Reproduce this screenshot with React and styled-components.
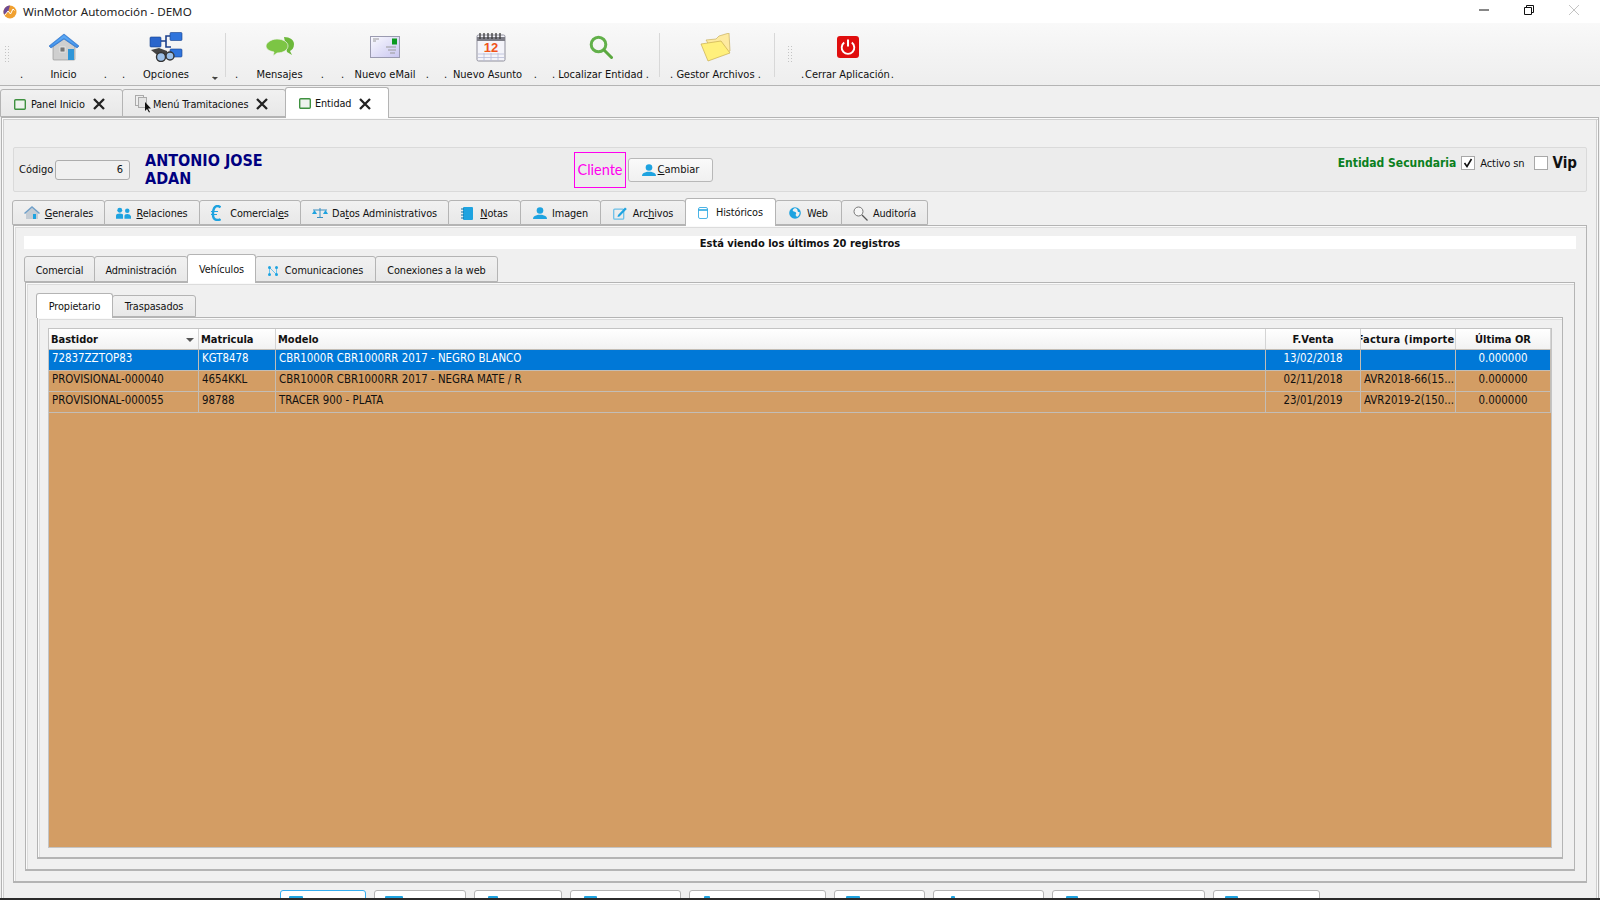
import styled, { createGlobalStyle } from "styled-components";

const BASE_FONT = `"DejaVu Sans Condensed", "DejaVu Sans", sans-serif`;
const LINE = "#b4b4b4";

const GlobalStyle = createGlobalStyle`
  html, body { margin: 0; padding: 0; background: #f0f0f0; }
  * { box-sizing: border-box; }
`;

/* ---------- icons ---------- */

const AppIcon = () => (
  <svg width="14" height="16" viewBox="0 0 14 16">
    <circle cx="7" cy="8" r="6.5" fill="#f0a030" />
    <path d="M7 1.5A6.5 6.5 0 0 0 1 10.5L5 8z" fill="#6d4a96" />
    <path d="M2 11l3-4 2.5 3L10 5l1.5 1.5" fill="none" stroke="#fff" strokeWidth="1" />
  </svg>
);

const HouseIcon = () => (
  <svg width="32" height="28" viewBox="0 0 32 28">
    <path d="M5 13L16 5l11 8v13q0 1-1 1H6q-1 0-1-1z" fill="#cfcfcf" stroke="#8a8a8a" strokeWidth=".6" />
    <path d="M1 13L16 1l15 12-2 2L16 6 3 15z" fill="#3f8fe8" stroke="#2a6cc0" strokeWidth=".6" />
    <path d="M16 2L3 13l13-8 13 8z" fill="#5aa6f2" />
    <rect x="12" y="14" width="5" height="5" fill="#777" stroke="#eee" strokeWidth=".8" />
    <rect x="20" y="16" width="6" height="11" fill="#2f96d8" />
  </svg>
);

const OptionsIcon = () => (
  <svg width="34" height="30" viewBox="0 0 34 30">
    <path d="M12 9h5V4h5M17 9v6h5" fill="none" stroke="#1c3f8a" strokeWidth="1.6" />
    <rect x="1" y="5" width="11" height="10" rx="1" fill="#2b66cc" stroke="#163f8a" strokeWidth=".6" />
    <rect x="21" y="0.5" width="12" height="8" rx="1" fill="#2f74dc" stroke="#163f8a" strokeWidth=".6" />
    <rect x="21" y="17" width="12" height="8" rx="1" fill="#2f74dc" stroke="#163f8a" strokeWidth=".6" />
    <path d="M2 18l8-2 8 3 1 5-7 2z" fill="#444" />
    <circle cx="12" cy="25" r="4.5" fill="#9cc0e8" stroke="#333" strokeWidth="1.4" />
    <circle cx="21" cy="24" r="4" fill="#9cc0e8" stroke="#333" strokeWidth="1.4" />
  </svg>
);

const MessagesIcon = () => (
  <svg width="30" height="22" viewBox="0 0 30 22">
    <path d="M19 1c6 0 10 3 10 7s-2 6-4 7l2 4-5-3z" fill="#6cb83a" />
    <path d="M12 3c6 0 11 3 11 7s-5 7-11 7l-4 3 1-4c-5-1-8-3-8-6s5-7 11-7z" fill="#7cc544" stroke="#f2f2f2" strokeWidth=".7" />
  </svg>
);

const MailIcon = () => (
  <svg width="30" height="22" viewBox="0 0 30 22">
    <defs>
      <linearGradient id="mailFill" x1="0" y1="0" x2="1" y2="1">
        <stop offset="0" stopColor="#fafaff" />
        <stop offset="1" stopColor="#c9c6f0" />
      </linearGradient>
    </defs>
    <rect x=".5" y=".5" width="29" height="21" fill="url(#mailFill)" stroke="#9a9ab0" />
    <rect x="22" y="2.5" width="5" height="6" fill="#0a9a1e" />
    <path d="M3 3h6M3 5h3M16 11h10M18 14h8M20 17h5" stroke="#9a9a9a" strokeWidth="1.1" />
  </svg>
);

const CalendarIcon = () => (
  <svg width="30" height="30" viewBox="0 0 30 30">
    <rect x="1" y="3" width="28" height="26" rx="1.5" fill="#f4f4fa" stroke="#8f8f9c" />
    <path d="M1 5h28v4H1z" fill="#7d7d86" />
    <path d="M4 1v6M8 1v6M12 1v6M16 1v6M20 1v6M24 1v6" stroke="#3a3a3a" strokeWidth="1.3" />
    <text x="15" y="20" fontFamily="Liberation Sans, sans-serif" fontWeight="700" fontSize="13" fill="#f0541a" textAnchor="middle">12</text>
    <path d="M2 22h26M2 25.5h26M8 21v8M15 21v8M22 21v8" stroke="#b8bcd8" strokeWidth=".8" />
  </svg>
);

const SearchIcon = () => (
  <svg width="24" height="24" viewBox="0 0 24 24">
    <circle cx="9.5" cy="9.5" r="7.3" fill="none" stroke="#62b04a" strokeWidth="3" />
    <path d="M15 15l7.5 7.5" stroke="#5aa83f" strokeWidth="3" strokeLinecap="round" />
  </svg>
);

const FolderIcon = () => (
  <svg width="31" height="29" viewBox="0 0 31 29">
    <path d="M6 7l10-1 3-3 10-3 1 18-14 5z" fill="#fdeaa0" stroke="#c9b060" strokeWidth=".7" />
    <path d="M1 11l20-3 9 12-22 8z" fill="#fff07c" stroke="#c9ae50" strokeWidth=".7" />
  </svg>
);

const PowerIcon = () => (
  <svg width="22" height="22" viewBox="0 0 22 22">
    <rect width="22" height="22" rx="3" fill="#e00e0e" />
    <path d="M7.2 6.6a6.3 6.3 0 1 0 7.6 0" fill="none" stroke="#fff" strokeWidth="1.9" />
    <path d="M11 3.6v7" stroke="#fff" strokeWidth="2" />
  </svg>
);

const GreenRect = () => (
  <svg width="12" height="11" viewBox="0 0 12 11">
    <rect x=".7" y=".7" width="10.600" height="9.600" rx="1" fill="#eef3ee" stroke="#3f9140" strokeWidth="1.400" />
  </svg>
);

const PagesCursor = () => (
  <svg width="18" height="18" viewBox="0 0 18 18">
    <rect x=".5" y=".5" width="8" height="10" fill="#eee" stroke="#aaa" />
    <rect x="3.5" y="2.5" width="8" height="10" fill="#e4e4e4" stroke="#aaa" />
    <path d="M10 7v9l2-2 2 3.5 1-.6-2-3.4h3z" fill="#111" />
  </svg>
);

const CloseX = styled.svg.attrs({ width: 12, height: 12, viewBox: "0 0 12 12", children: <path d="M1 1l10 10M11 1L1 11" stroke="#222" strokeWidth="2.300" /> })`
  margin-left: ${(p) => p.$left}px;
  flex: none;
`;

const BLUE = "#1ea3e0";

const TabGlyph = ({ name }) => {
  switch (name) {
    case "house":
      return (
        <svg width="16" height="14" viewBox="0 0 16 14">
          <path d="M2 7l6-5 6 5v6H2z" fill="#c4ccd4" />
          <path d="M0 7l8-7 8 7-1 1-7-6-7 6z" fill="#6f9fc8" />
          <rect x="9" y="8" width="3" height="5" fill={BLUE} />
        </svg>
      );
    case "people":
      return (
        <svg width="15" height="13" viewBox="0 0 16 13">
          <circle cx="4" cy="3" r="2.6" fill={BLUE} />
          <circle cx="12" cy="3.5" r="2.4" fill={BLUE} />
          <path d="M0 12V9q0-2.500 4-2.500T7.500 9v3zM9 12V9.500q0-2.500 3-2.500t4 2.500V12z" fill={BLUE} />
        </svg>
      );
    case "euro":
      return (
        <svg width="10" height="16" viewBox="0 0 10 16">
          <path d="M9.500 2.500Q8 1 6.500 1 2.500 1 2 8t4.500 7q2 0 3-1" fill="none" stroke={BLUE} strokeWidth="2.400" />
          <path d="M0 6.500h7M0 9.500h6" stroke={BLUE} strokeWidth="1.200" />
        </svg>
      );
    case "scale":
      return (
        <svg width="16" height="10" viewBox="0 0 16 10">
          <path d="M1 2h14M8 0v9M5 9.500h6" stroke="#3a8fc0" strokeWidth="1" />
          <path d="M0 6h5L2.500 2zM11 6h5l-2.500-4z" fill={BLUE} />
        </svg>
      );
    case "note":
      return (
        <svg width="12" height="13" viewBox="0 0 12 13">
          <rect x="2" y="0" width="10" height="13" rx="1" fill={BLUE} />
          <path d="M0 2h3M0 5h3M0 8h3M0 11h3" stroke="#0f6f9f" strokeWidth="1.200" />
        </svg>
      );
    case "person":
      return (
        <svg width="14" height="12" viewBox="0 0 14 12">
          <circle cx="7" cy="3.500" r="3.300" fill={BLUE} />
          <path d="M0 12q0-3 3-3.500l2-.8h4l2 .8q3 .5 3 3.500z" fill={BLUE} />
        </svg>
      );
    case "edit":
      return (
        <svg width="14" height="13" viewBox="0 0 14 13">
          <rect x=".7" y="2.200" width="10" height="10" rx="1" fill="none" stroke="#6cc0e8" strokeWidth="1.300" />
          <path d="M5 8l7-7.500 1.800 1.500L6.500 9.500 4.500 10z" fill={BLUE} />
        </svg>
      );
    case "db":
      return (
        <svg width="10" height="12" viewBox="0 0 10 12">
          <rect x=".5" y=".5" width="9" height="11" rx="1.500" fill="#fff" stroke="#4cb4e6" />
          <path d="M.5 3h9" stroke={BLUE} strokeWidth="1.500" />
        </svg>
      );
    case "globe":
      return (
        <svg width="12" height="12" viewBox="0 0 12 12">
          <circle cx="6" cy="6" r="5.800" fill={BLUE} />
          <path d="M6 1C3.500 2 3 4 5 4.500S8 6 6.500 8L8 10q3-2 2.500-5L9 5 8 2z" fill="#f0f0f0" />
        </svg>
      );
    case "lens":
      return (
        <svg width="15" height="15" viewBox="0 0 15 15">
          <circle cx="5.500" cy="5.500" r="4.500" fill="#f6f6f6" stroke="#777" />
          <path d="M9 9l5.500 5.500" stroke="#555" strokeWidth="1.300" />
        </svg>
      );
    case "nodes":
      return (
        <svg width="10" height="10" viewBox="0 0 10 10">
          <path d="M1.500 1.500v7M8.500 1.500v7M1.500 1.500l7 7" stroke="#6cc4ee" strokeWidth="1" fill="none" />
          <circle cx="1.500" cy="1.500" r="1.500" fill={BLUE} />
          <circle cx="8.500" cy="1.500" r="1.500" fill={BLUE} />
          <circle cx="1.500" cy="8.500" r="1.500" fill={BLUE} />
          <circle cx="8.500" cy="8.500" r="1.500" fill={BLUE} />
        </svg>
      );
    default:
      return null;
  }
};

/* ---------- title bar ---------- */

const Shell = styled.div`
  width: 1600px;
  height: 900px;
  display: flex;
  flex-direction: column;
  overflow: hidden;
  background: #f0f0f0;
  color: #111;
  font-family: ${BASE_FONT};
  font-size: 11px;
`;

const TitleBar = styled.header`
  height: 23px;
  flex: none;
  background: #fff;
  display: flex;
  align-items: center;
  padding-left: 3px;
`;

const TitleText = styled.span`
  margin-left: 6px;
  font-family: "Noto Sans", sans-serif;
  font-size: 11.650px;
  color: #222;
`;

const WindowControls = styled.div`
  margin-left: auto;
  margin-right: 4px;
  display: flex;
  align-items: center;
  height: 100%;
  padding-bottom: 3px;
`;

const WindowButton = styled.span`
  width: 45px;
  display: flex;
  justify-content: center;
`;

/* ---------- toolbar ---------- */

const Toolbar = styled.nav`
  height: 63px;
  flex: none;
  display: flex;
  padding-left: 5px;
  background: linear-gradient(#f9f9f9, #f2f2f2 60%, #eeeeee);
  border-bottom: 1px solid ${LINE};
`;

const Grip = styled.span`
  width: 5px;
  height: 16px;
  margin-top: 23px;
  flex: none;
  background-image: radial-gradient(circle at 0.5px 0.5px, #c4c4c4 0.6px, transparent 0.7px);
  background-size: 3px 3px;
`;

const ToolSep = styled.span`
  width: 1px;
  height: 44px;
  margin: 10px ${(p) => p.$right}px 0 ${(p) => p.$left}px;
  flex: none;
  background: #d8d8d8;
`;

const Tool = styled.button`
  width: ${(p) => p.$w}px;
  margin-left: ${(p) => p.$gap}px;
  flex: none;
  height: 62px;
  padding: 0;
  border: 0;
  background: none;
  font: inherit;
  color: #111;
  display: flex;
  flex-direction: column;
  align-items: center;
`;

const ToolIcon = styled.span`
  height: 38px;
  margin-top: 5px;
  margin-right: ${(p) => p.$nudge || 0}px;
  display: flex;
  align-items: center;
  justify-content: center;
`;

const ToolLabel = styled.span`
  width: 100%;
  margin-top: 2px;
  display: flex;
  justify-content: space-between;
  line-height: 14px;
  white-space: pre;
`;

const ToolText = styled.span`
  margin-right: ${(p) => p.$nudge || 0}px;
`;

const MoreArrow = styled.span`
  position: absolute;
  width: 0;
  height: 0;
  margin: 9px 0 0 -3px;
  border: 3px solid transparent;
  border-top: 3px solid #444;
  border-bottom: 0;
`;

/* ---------- tabs ---------- */

const DocTabs = styled.div`
  height: 31px;
  flex: none;
  display: flex;
  align-items: flex-end;
  position: relative;
  z-index: 1;
`;

const TabStrip = styled.div`
  display: flex;
  align-items: flex-end;
  height: ${(p) => p.$h}px;
  margin-left: ${(p) => p.$left}px;
  flex: none;
  position: relative;
  z-index: 1;
`;

const Tab = styled.div`
  width: ${(p) => p.$w}px;
  height: ${(p) => (p.$active ? p.$h + 3 : p.$h)}px;
  margin-bottom: ${(p) => (p.$active ? -1 : 0)}px;
  padding-top: ${(p) => p.$top ?? 1}px;
  padding-bottom: ${(p) => (p.$active ? 1 : 0)}px;
  flex: none;
  display: flex;
  align-items: center;
  justify-content: ${(p) => (p.$start ? "flex-start" : "center")};
  padding-left: ${(p) => p.$pad || 0}px;
  gap: ${(p) => p.$gap ?? 6}px;
  white-space: nowrap;
  font-size: 10.800px;
  letter-spacing: -0.1px;
  border: 1px solid ${LINE};
  border-bottom: ${(p) => (p.$active ? "0" : `1px solid ${LINE}`)};
  border-radius: 3px 3px 0 0;
  background: ${(p) => (p.$active ? "#fff" : "linear-gradient(#f1f1f1, #e8e8e8)")};
  margin-right: -1px;
`;

const Pane = styled.section`
  flex: none;
  height: ${(p) => p.$h}px;
  margin: 0 ${(p) => p.$x}px;
  padding: ${(p) => p.$pt}px ${(p) => p.$px}px 0;
  border: 1px solid ${LINE};
  border-bottom-width: 2px;
  box-shadow: inset 1px 1px 0 #fafafa, inset 2px 2px 0 #dcdcdc;
  background: #f0f0f0;
`;

/* ---------- main panel ---------- */

const MainPanel = styled.main`
  flex: 1;
  min-height: 0;
  margin: 0 1px;
  padding-top: 29px;
  border: 1px solid ${LINE};
  border-bottom: 0;
  box-shadow: inset 1px 1px 0 #fafafa, inset 2px 2px 0 #cfcfcf, inset -1px 0 0 #fafafa, inset -2px 0 0 #cfcfcf;
  overflow: hidden;
  background: #f0f0f0;
`;

const EntityBox = styled.div`
  height: 45px;
  margin: 0 11px 8px 11px;
  padding: 0 9px 0 5px;
  display: flex;
  align-items: center;
  background: #ececec;
  border: 1px solid #dadada;
  border-radius: 2px;
`;

const CodeLabel = styled.span`
  width: 36px;
  flex: none;
`;

const CodeInput = styled.span`
  width: 75px;
  height: 20px;
  padding-right: 6px;
  display: flex;
  align-items: center;
  justify-content: flex-end;
  border: 1px solid #adadad;
  border-radius: 3px;
  background: #f0f0f0;
`;

const EntityName = styled.div`
  width: 429px;
  margin-left: 15px;
  font-size: 16px;
  line-height: 18px;
  font-weight: 700;
  color: #000080;
`;

const ClientBadge = styled.span`
  width: 52px;
  height: 36px;
  display: flex;
  align-items: center;
  justify-content: center;
  border: 1px solid #ff00ee;
  font-family: "Lato", sans-serif;
  font-weight: 400;
  font-size: 14.500px;
  color: #ff00ee;
`;

const ChangeButton = styled.button`
  width: 85px;
  height: 24px;
  margin-left: 2px;
  padding: 0;
  display: flex;
  align-items: center;
  justify-content: center;
  gap: 2px;
  border: 1px solid #b8b8b8;
  border-radius: 3px;
  background: linear-gradient(#fafafa, #f0f0f0);
  font: inherit;
  color: #111;
`;

const EntityFlags = styled.div`
  margin: 0 0 13px auto;
  display: flex;
  align-items: center;
`;

const SecondaryLabel = styled.span`
  font-size: 12px;
  font-weight: 700;
  color: #0a8020;
`;

const CheckBox = styled.span`
  width: 14px;
  height: 14px;
  flex: none;
  margin-left: ${(p) => p.$left}px;
  display: flex;
  align-items: center;
  justify-content: center;
  border: 1px solid #a8a8a8;
  background: #fff;
`;

const ActiveLabel = styled.span`
  margin-left: 5px;
  letter-spacing: -0.1px;
`;

const VipLabel = styled.span`
  margin-left: 5px;
  font-size: 15px;
  font-weight: 700;
`;

const Notice = styled.div`
  height: 13px;
  margin-bottom: 7px;
  background: #fff;
  text-align: center;
  line-height: 15px;
  font-weight: 700;
`;

/* ---------- grid ---------- */

const GridWrap = styled.div`
  height: 520px;
  border: 1px solid #c4c4c4;
  background: #d39d64;
`;

const GridRow = styled.div`
  display: grid;
  grid-template-columns: 150px 77px 990px 95px 95px 95px;
  height: 21px;
  background: ${(p) => p.$bg};
  color: ${(p) => p.$fg};
  border-bottom: 1px solid #c3bdb5;
`;

const HeadCell = styled.div`
  position: relative;
  display: flex;
  align-items: center;
  justify-content: ${(p) => (p.$center ? "center" : "flex-start")};
  padding-left: ${(p) => (p.$center ? 0 : 2)}px;
  border-right: 1px solid #d4d4d4;
  background: linear-gradient(#ffffff, #f2f2f2);
  font-weight: 700;
  letter-spacing: ${(p) => (p.$wide ? 0.25 : 0)}px;
  white-space: nowrap;
  overflow: hidden;
`;

const SortMark = styled.span`
  position: absolute;
  right: 4px;
  top: 9px;
  border: 4px solid transparent;
  border-top: 4px solid #555;
  border-bottom: 0;
`;

const Cell = styled.div`
  display: flex;
  align-items: center;
  justify-content: ${(p) => (p.$center ? "center" : "flex-start")};
  padding: 0 0 4px ${(p) => (p.$center ? 0 : 3)}px;
  border-right: 1px solid #c3bdb5;
  font-size: 11.400px;
  white-space: nowrap;
  overflow: hidden;
`;

/* ---------- bottom buttons ---------- */

const BottomBar = styled.div`
  display: flex;
  gap: 8px;
  margin: 7px 0 0 278px;
`;

const BottomButton = styled.div`
  width: ${(p) => p.$w}px;
  height: 30px;
  flex: none;
  padding: 5px 0 0 ${(p) => p.$pad}px;
  border: 1px solid ${(p) => (p.$active ? "#36aef0" : "#b4b4b4")};
  border-radius: 3px;
  background: #fff;
`;

const Peek = styled.span`
  display: block;
  width: ${(p) => p.$w}px;
  height: 12px;
  background: ${BLUE};
  border-radius: 1px;
`;

const ScreenEdge = styled.div`
  height: 2px;
  flex: none;
  background: #2b2b2b;
`;

const tools = [
  { label: "Inicio", w: 87, gap: 10, icon: <HouseIcon /> },
  { label: "Opciones", w: 93, gap: 15, icon: <OptionsIcon />, more: true, iconNudge: 5, textNudge: 5 },
  { sep: [10, 9] },
  { label: "Mensajes", w: 89, gap: 0, icon: <MessagesIcon /> },
  { label: "Nuevo eMail", w: 88, gap: 17, icon: <MailIcon /> },
  { label: "Nuevo Asunto", w: 93, gap: 15, icon: <CalendarIcon />, textNudge: 6 },
  { label: "Localizar Entidad", w: 97, gap: 15, icon: <SearchIcon /> },
  { sep: [10, 10] },
  { label: "Gestor Archivos", w: 91, gap: 0, icon: <FolderIcon /> },
  { sep: [13, 13] },
  { grip: true },
  { label: "Cerrar Aplicación", w: 93, gap: 8, icon: <PowerIcon /> },
];

const entityTabs = [
  { w: 93, icon: "house", gap: 5, label: <><u>G</u>enerales</> },
  { w: 96, icon: "people", gap: 5, label: <><u>R</u>elaciones</> },
  { w: 102, icon: "euro", gap: 9, label: <>Comercial<u>e</u>s</> },
  { w: 149, icon: "scale", gap: 4, label: <>Da<u>t</u>os Administrativos</> },
  { w: 73, icon: "note", gap: 7, label: <><u>N</u>otas</> },
  { w: 81, icon: "person", gap: 5, label: "Imagen" },
  { w: 86, icon: "edit", gap: 6, label: <>Arc<u>h</u>ivos</> },
  { w: 91, icon: "db", gap: 8, label: "Históricos", active: true },
  { w: 67, icon: "globe", gap: 6, label: "Web" },
  { w: 87, icon: "lens", gap: 5, label: "Auditoría" },
];

const historyTabs = [
  { w: 71, label: "Comercial" },
  { w: 94, label: "Administración" },
  { w: 69, label: "Vehículos", active: true },
  { w: 121, icon: "nodes", gap: 7, label: "Comunicaciones" },
  { w: 123, label: "Conexiones a la web" },
];

const vehicles = [
  ["72837ZZTOP83", "KGT8478", "CBR1000R CBR1000RR 2017 - NEGRO BLANCO", "13/02/2018", "", "0.000000"],
  ["PROVISIONAL-000040", "4654KKL", "CBR1000R CBR1000RR 2017 - NEGRA MATE / R", "02/11/2018", "AVR2018-66(15...", "0.000000"],
  ["PROVISIONAL-000055", "98788", "TRACER 900 - PLATA", "23/01/2019", "AVR2019-2(150...", "0.000000"],
];

const bottomButtons = [
  { w: 86, pad: 8, peek: 14, active: true },
  { w: 92, pad: 10, peek: 18 },
  { w: 88, pad: 13, peek: 10 },
  { w: 111, pad: 13, peek: 13 },
  { w: 137, pad: 14, peek: 6 },
  { w: 91, pad: 11, peek: 14 },
  { w: 111, pad: 17, peek: 4 },
  { w: 153, pad: 13, peek: 12 },
  { w: 107, pad: 11, peek: 13 },
];

const App = () => {
  return (
    <Shell>
      <GlobalStyle />
      <TitleBar>
        <AppIcon />
        <TitleText>WinMotor Automoción - DEMO</TitleText>
        <WindowControls>
          <WindowButton>
            <svg width="10" height="10" viewBox="0 0 10 10"><path d="M0 5h10" stroke="#111" /></svg>
          </WindowButton>
          <WindowButton>
            <svg width="10" height="10" viewBox="0 0 10 10"><path d="M.5 2.500h7v7h-7zM2.500 2.500v-2h7v7h-2" fill="none" stroke="#111" /></svg>
          </WindowButton>
          <WindowButton>
            <svg width="10" height="10" viewBox="0 0 10 10"><path d="M0 0l10 10M10 0L0 10" stroke="#c4c4c4" /></svg>
          </WindowButton>
        </WindowControls>
      </TitleBar>

      <Toolbar>
        <Grip />
        {tools.map((t, i) => {
          if (t.sep) return <ToolSep key={i} $left={t.sep[0]} $right={t.sep[1]} />;
          if (t.grip) return <Grip key={i} />;
          return (
            <Tool key={t.label} $w={t.w} $gap={t.gap}>
              <ToolIcon $nudge={t.iconNudge}>{t.icon}</ToolIcon>
              <ToolLabel>
                <span>.</span>
                <ToolText $nudge={t.textNudge}>{t.label}</ToolText>
                <span>.{t.more && <MoreArrow />}</span>
              </ToolLabel>
            </Tool>
          );
        })}
      </Toolbar>

      <DocTabs>
        <Tab $w={123} $h={28} $top={2} $start $pad={13} $gap={5}>
          <GreenRect /> Panel Inicio <CloseX $left={3} />
        </Tab>
        <Tab $w={164} $h={28} $top={2} $start $pad={12} $gap={0}>
          <PagesCursor /> Menú Tramitaciones <CloseX $left={8} />
        </Tab>
        <Tab $w={104} $h={28} $top={2} $active $start $pad={13} $gap={4}>
          <GreenRect /> Entidad <CloseX $left={4} />
        </Tab>
      </DocTabs>

      <MainPanel>
        <EntityBox>
          <CodeLabel>Código</CodeLabel>
          <CodeInput>6</CodeInput>
          <EntityName>
            ANTONIO JOSE
            <br />
            ADAN
          </EntityName>
          <ClientBadge>Cliente</ClientBadge>
          <ChangeButton>
            <TabGlyph name="person" />
            <span><u>C</u>ambiar</span>
          </ChangeButton>
          <EntityFlags>
            <SecondaryLabel>Entidad Secundaria</SecondaryLabel>
            <CheckBox $left={5}>
              <svg width="10" height="10" viewBox="0 0 10 10"><path d="M1.500 5l2.500 3.500L8.500 1" fill="none" stroke="#111" strokeWidth="1.600" /></svg>
            </CheckBox>
            <ActiveLabel>Activo sn</ActiveLabel>
            <CheckBox $left={9} />
            <VipLabel>Vip</VipLabel>
          </EntityFlags>
        </EntityBox>

        <TabStrip $h={25} $left={10}>
          {entityTabs.map((t) => (
            <Tab key={t.icon} $w={t.w} $h={25} $active={t.active} $gap={t.gap}>
              <TabGlyph name={t.icon} />
              <span>{t.label}</span>
            </Tab>
          ))}
        </TabStrip>

        <Pane $h={658} $x={11} $pt={10} $px={10}>
          <Notice>Está viendo los últimos 20 registros</Notice>
          <TabStrip $h={26} $left={0}>
            {historyTabs.map((t) => (
              <Tab key={t.label} $w={t.w} $h={26} $top={t.active ? 2 : 3} $active={t.active} $gap={t.gap}>
                {t.icon && <TabGlyph name={t.icon} />}
                <span>{t.label}</span>
              </Tab>
            ))}
          </TabStrip>
          <Pane $h={589} $x={1} $pt={12} $px={11}>
            <TabStrip $h={22} $left={-1}>
              <Tab $w={77} $h={22} $active>Propietario</Tab>
              <Tab $w={84} $h={22}>Traspasados</Tab>
            </TabStrip>
            <Pane $h={542} $x={0} $pt={10} $px={10}>
              <GridWrap>
                <GridRow $bg="#fff" $fg="#111">
                  <HeadCell>Bastidor<SortMark /></HeadCell>
                  <HeadCell>Matricula</HeadCell>
                  <HeadCell>Modelo</HeadCell>
                  <HeadCell $center>F.Venta</HeadCell>
                  <HeadCell $center $wide>Factura (importe)</HeadCell>
                  <HeadCell $center>Última OR</HeadCell>
                </GridRow>
                {vehicles.map((row, i) => (
                  <GridRow key={row[0]} $bg={i === 0 ? "#0078d7" : "#d39d64"} $fg={i === 0 ? "#fff" : "#111"}>
                    <Cell>{row[0]}</Cell>
                    <Cell>{row[1]}</Cell>
                    <Cell>{row[2]}</Cell>
                    <Cell $center>{row[3]}</Cell>
                    <Cell>{row[4]}</Cell>
                    <Cell $center>{row[5]}</Cell>
                  </GridRow>
                ))}
              </GridWrap>
            </Pane>
          </Pane>
        </Pane>

        <BottomBar>
          {bottomButtons.map((b, i) => (
            <BottomButton key={i} $w={b.w} $pad={b.pad} $active={b.active}>
              <Peek $w={b.peek} />
            </BottomButton>
          ))}
        </BottomBar>
      </MainPanel>
      <ScreenEdge />
    </Shell>
  );
};

export default App;
